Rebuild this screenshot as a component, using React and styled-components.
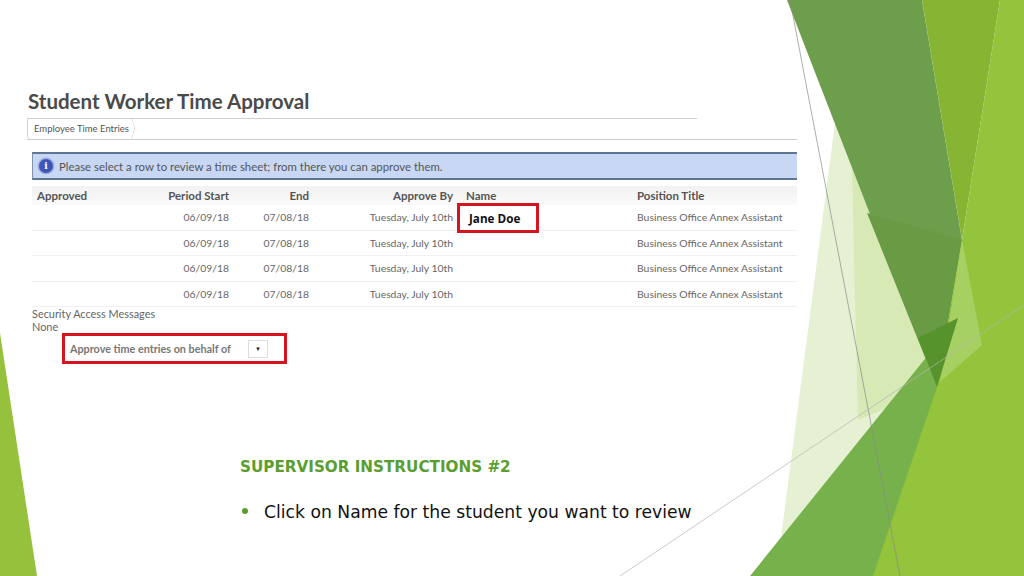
import React from 'react'
import styled, { createGlobalStyle } from 'styled-components'

const GlobalStyle = createGlobalStyle`
    html, body {
        margin: 0;
        padding: 0;
        background: #fff;
    }
    * {
        box-sizing: border-box;
    }
`

const rows = [
    { start: '06/09/18', end: '07/08/18', by: 'Tuesday, July 10th', name: 'Jane Doe', position: 'Business Office Annex Assistant' },
    { start: '06/09/18', end: '07/08/18', by: 'Tuesday, July 10th', name: '', position: 'Business Office Annex Assistant' },
    { start: '06/09/18', end: '07/08/18', by: 'Tuesday, July 10th', name: '', position: 'Business Office Annex Assistant' },
    { start: '06/09/18', end: '07/08/18', by: 'Tuesday, July 10th', name: '', position: 'Business Office Annex Assistant' },
]

const Decor = () => (
    <DecorSvg viewBox="0 0 1024 576" preserveAspectRatio="none">
        <polygon points="0,333 0,576 37,576" fill="#95c13d" />
        <polygon points="835,123 937,387 776,576" fill="#e6f0d3" />
        <polygon points="852,168 937,387 858,420" fill="#d4e8ae" opacity="0.85" />
        <polygon points="787,0 922,0 962,240 937,387" fill="#6d9e4c" />
        <polygon points="867,213 962,240 937,387" fill="#699b44" />
        <polygon points="922,0 1000,0 962,240" fill="#85b533" />
        <polygon points="750,576 1024,236 1024,576" fill="#77b14b" />
        <polygon points="1000,0 1024,0 1024,576 873,576 937,387 962,240" fill="#93c43b" />
        <polygon points="962,240 982,345 940,382" fill="#a8d266" opacity="0.9" />
        <polygon points="918,338 958,318 937,387" fill="#56932d" />
        <line x1="790" y1="0" x2="900" y2="576" stroke="#8a8a8a" strokeWidth="0.7" />
        <line x1="620" y1="576" x2="1024" y2="305" stroke="#b5b5b5" strokeWidth="0.7" />
    </DecorSvg>
)

const App = () => {
    return (
        <>
            <GlobalStyle />
            <Slide>
                <Decor />
                <Content>
                    <Shot>
                        <ShotTitle>Student Worker Time Approval</ShotTitle>
                        <Breadcrumb>
                            <Crumb>Employee Time Entries</Crumb>
                        </Breadcrumb>
                        <InfoBar>
                            <InfoIcon>i</InfoIcon>
                            Please select a row to review a time sheet; from there you can approve them.
                        </InfoBar>
                        <Table>
                            <HeadRow>
                                <Cell pad="5px">Approved</Cell>
                                <Cell align="right">Period Start</Cell>
                                <Cell align="right">End</Cell>
                                <Cell align="right">Approve By</Cell>
                                <Cell pad="13px">Name</Cell>
                                <Cell>Position Title</Cell>
                            </HeadRow>
                            {rows.map((r, i) => (
                                <Row key={i}>
                                    <Cell />
                                    <Cell align="right">{r.start}</Cell>
                                    <Cell align="right">{r.end}</Cell>
                                    <Cell align="right">{r.by}</Cell>
                                    <NameCell pad="13px">
                                        {r.name && <Highlight>{r.name}</Highlight>}
                                    </NameCell>
                                    <Cell>{r.position}</Cell>
                                </Row>
                            ))}
                        </Table>
                        <Messages>
                            <span>Security Access Messages</span>
                            <span>None</span>
                        </Messages>
                        <BehalfBox>
                            Approve time entries on behalf of
                            <SelectBox>▼</SelectBox>
                        </BehalfBox>
                    </Shot>
                    <Instructions>
                        <Heading>SUPERVISOR INSTRUCTIONS #2</Heading>
                        <Bullets>
                            <Bullet>Click on Name for the student you want to review</Bullet>
                        </Bullets>
                    </Instructions>
                </Content>
            </Slide>
        </>
    )
}

export default App

const Slide = styled.div`
    position: relative;
    width: 1024px;
    height: 576px;
    overflow: hidden;
    background: #fff;
`
const DecorSvg = styled.svg`
    position: absolute;
    inset: 0;
    width: 1024px;
    height: 576px;
`
const Content = styled.div`
    position: relative;
    display: flex;
    flex-direction: column;
    padding: 88px 0 0 27px;
`
const Shot = styled.div`
    width: 770px;
    display: flex;
    flex-direction: column;
    font-family: Lato, "Liberation Sans", sans-serif;
    color: #666;
`
const ShotTitle = styled.h1`
    margin: 0 0 0 1px;
    font-size: 20.5px;
    line-height: 26px;
    font-weight: 700;
    color: #4a4a4a;
`
const Breadcrumb = styled.div`
    position: relative;
    margin-top: 4px;
    height: 22px;
    border-bottom: 1px solid #cfcfcf;
    display: flex;
    align-items: stretch;

    &::before {
        content: '';
        position: absolute;
        left: 0;
        top: 0;
        width: 670px;
        border-top: 1px solid #cfcfcf;
    }
`
const Crumb = styled.div`
    position: relative;
    display: flex;
    align-items: center;
    padding: 0 6px;
    font-size: 9.5px;
    color: #555;
    border-left: 1px solid #cfcfcf;
    border-radius: 4px 0 0 4px;

    &::after {
        content: '';
        position: absolute;
        right: -4px;
        top: 3px;
        width: 14px;
        height: 14px;
        border-top: 1px solid #c8c8c8;
        border-right: 1px solid #c8c8c8;
        transform: scaleX(0.35) rotate(45deg);
    }
`
const InfoBar = styled.div`
    margin: 12px 0 0 5px;
    height: 28px;
    display: flex;
    align-items: center;
    gap: 6px;
    padding-left: 6px;
    background: #c8d8f4;
    border-top: 2px solid #5f7594;
    border-bottom: 2px solid #5f7594;
    border-left: 1px solid #8093ae;
    font-size: 11.4px;
    color: #555;
`
const InfoIcon = styled.span`
    width: 14px;
    height: 14px;
    border-radius: 50%;
    background: #3e56b8;
    box-shadow: 0 0 0 1.5px #9fb0e0;
    color: #fff;
    font-size: 9px;
    font-weight: 700;
    display: flex;
    align-items: center;
    justify-content: center;
    font-family: "DejaVu Serif", serif;
`
const Table = styled.div`
    margin: 6px 0 0 5px;
    display: flex;
    flex-direction: column;
`
const HeadRow = styled.div`
    display: grid;
    grid-template-columns: 108px 89px 80px 144px 184px 1fr;
    height: 19px;
    align-items: center;
    background: linear-gradient(#f2f2f2, #fafafa);
    font-size: 11.5px;
    font-weight: 700;
    color: #555;
`
const Row = styled.div`
    display: grid;
    grid-template-columns: 108px 89px 80px 144px 184px 1fr;
    height: 25.6px;
    align-items: center;
    border-bottom: 1px solid #f0f0f0;
    font-size: 10.4px;
    color: #666;
`
const Cell = styled.div`
    padding-left: ${p => p.pad || '0'};
    text-align: ${p => p.align || 'left'};
    white-space: nowrap;
`
const NameCell = styled(Cell)`
    position: relative;
    height: 100%;
`
const Highlight = styled.div`
    position: absolute;
    left: 4px;
    top: -2px;
    width: 82px;
    height: 30px;
    border: 3px solid #d5141f;
    background: #fff;
    padding-left: 9px;
    display: flex;
    align-items: center;
    font-family: "Open Sans", "Liberation Sans", sans-serif;
    font-size: 11.7px;
    font-weight: 700;
    color: #111;
`
const Messages = styled.div`
    margin: 0 0 0 5px;
    display: flex;
    flex-direction: column;
    font-size: 10.9px;
    line-height: 13px;
    color: #666;
`
const BehalfBox = styled.div`
    margin: 0 0 0 35px;
    width: 225px;
    height: 31px;
    border: 3px solid #d5141f;
    display: flex;
    align-items: center;
    padding-left: 5px;
    font-size: 10.8px;
    font-weight: 700;
    color: #777;
`
const SelectBox = styled.span`
    margin-left: 17px;
    width: 20px;
    height: 18px;
    border: 1px solid #ddd;
    display: flex;
    align-items: center;
    justify-content: center;
    font-size: 6px;
    color: #222;
`
const Instructions = styled.div`
    margin: 92px 0 0 213px;
    display: flex;
    flex-direction: column;
    font-family: "DejaVu Sans", "Liberation Sans", sans-serif;
`
const Heading = styled.h2`
    margin: 0;
    font-size: 15.2px;
    line-height: 22px;
    font-weight: 700;
    color: #5b9e30;
`
const Bullets = styled.ul`
    margin: 22px 0 0;
    padding: 0;
    list-style: none;
`
const Bullet = styled.li`
    position: relative;
    padding-left: 24px;
    font-size: 17.2px;
    line-height: 24px;
    color: #111;

    &::before {
        content: '';
        position: absolute;
        left: 2px;
        top: 8px;
        width: 6px;
        height: 6px;
        border-radius: 50%;
        background: #5b9e30;
    }
`
